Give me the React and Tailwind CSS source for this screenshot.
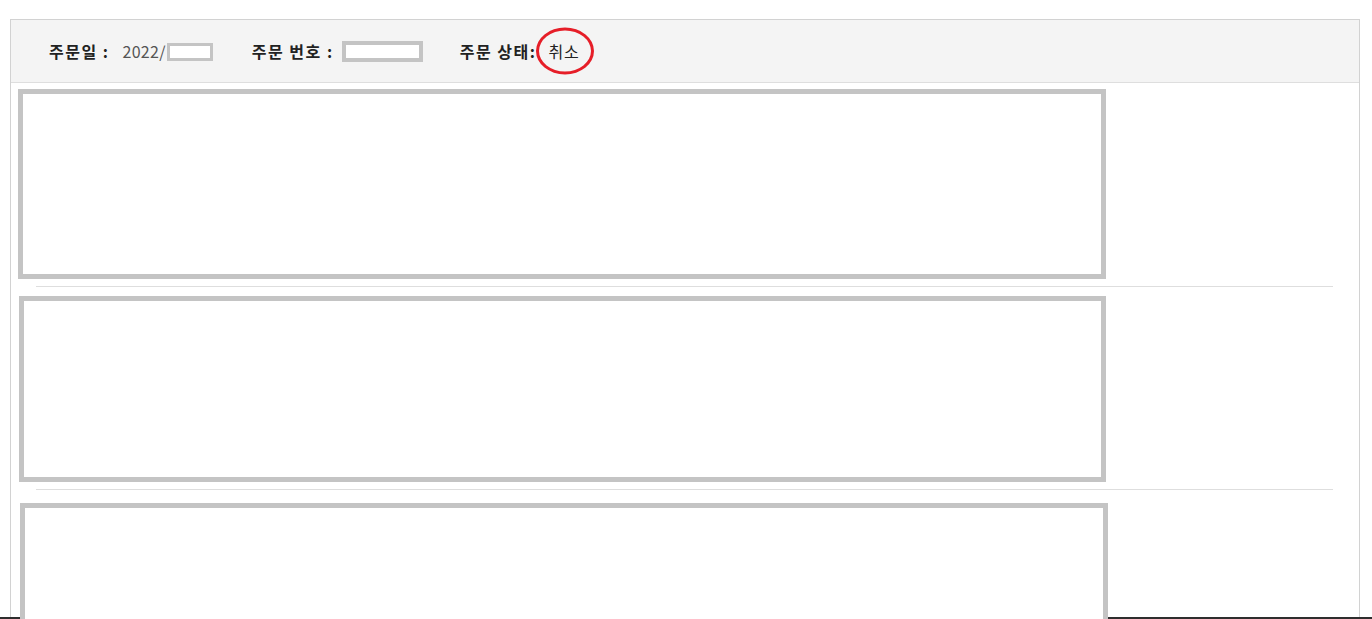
export default function App() {
    return (
        <div className="relative h-[619px] overflow-hidden bg-white pt-[19px] font-['Noto_Sans_CJK_KR','Liberation_Sans',sans-serif] text-[16px] leading-[20px]">
            <div className="ml-[10px] h-[620px] w-[1350px] overflow-hidden border border-[#d2d2d2]">

                {/* HEADER */}
                <div className="flex h-[63px] items-center border-b border-[#dedede] bg-[#f4f4f4] pl-[38px]">
                    <span className="font-semibold tracking-[1.5px] text-[#222]">주문일 :</span>
                    <span className="ml-[13px] tracking-[0.3px] text-[#555]">2022/</span>
                    <span className="ml-[1px] mt-[2px] h-[18px] w-[46px] border-[3px] border-[#c4c4c4] bg-white" />

                    <span className="ml-[39px] font-semibold tracking-[1.5px] text-[#222]">주문 번호 :</span>
                    <span className="ml-[8px] h-[21px] w-[81px] border-[4px] border-[#c4c4c4] bg-white" />

                    <span className="ml-[37px] font-semibold tracking-[1.5px] text-[#222]">주문 상태:</span>
                    <span className="relative ml-[12px] tracking-[1px] text-[#222]">
                        취소
                        <span className="absolute left-[-12px] top-1/2 h-[47px] w-[58px] -translate-y-1/2 rounded-[50%] border-[3px] border-[#e61e28]" />
                    </span>
                </div>

                {/* ITEMS */}
                <div className="pt-[6px]">
                    <div className="ml-[7px] h-[190px] w-[1088px] border-[5px] border-[#c4c4c4] bg-white" />
                    <div className="ml-[25px] mt-[7px] h-px w-[1297px] bg-[#dedede]" />
                    <div className="ml-[8px] mt-[9px] h-[186px] w-[1087px] border-[5px] border-[#c4c4c4] bg-white" />
                    <div className="ml-[25px] mt-[7px] h-px w-[1297px] bg-[#dedede]" />
                    <div className="relative z-10 ml-[9px] mt-[13px] h-[190px] w-[1088px] border-[5px] border-[#c4c4c4] bg-white" />
                </div>
            </div>

            <div className="absolute left-0 top-[617px] h-[2px] w-full bg-[#2e2e2e]" />
        </div>
    );
}
